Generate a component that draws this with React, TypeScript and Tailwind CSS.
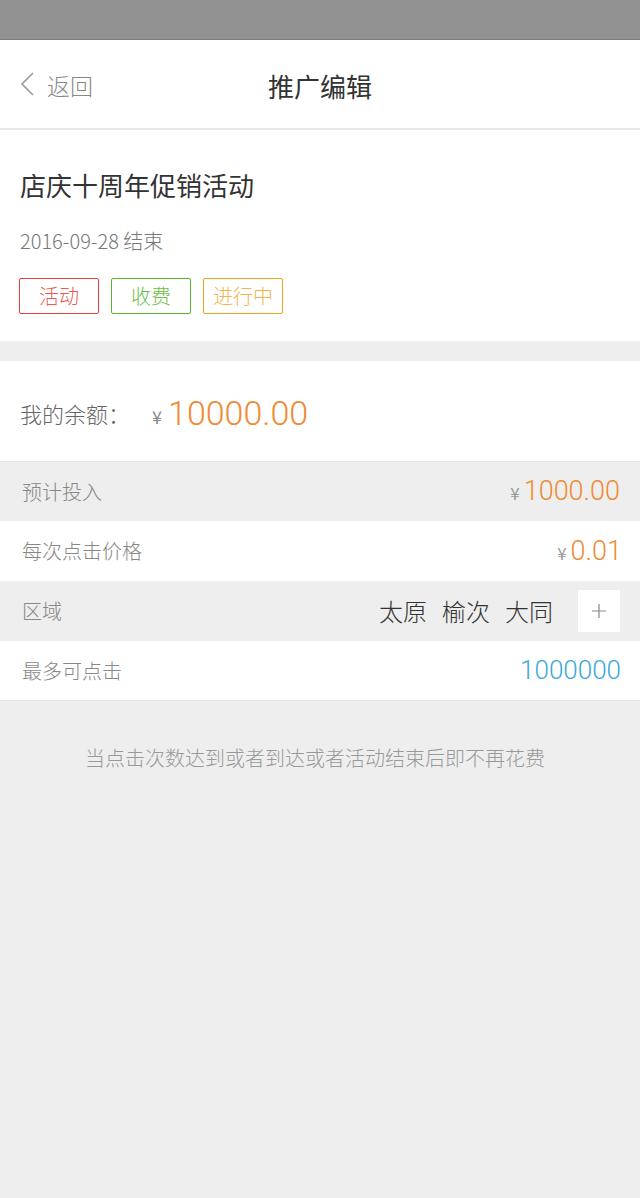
import React from 'react';

const font = { fontFamily: '"Noto Sans CJK SC", "Noto Sans", sans-serif' };
const digits = { fontFamily: 'Roboto, sans-serif' };

const tags = [
  { label: '活动', className: 'border-[#e5403a] text-[#ec5a52]' },
  { label: '收费', className: 'border-[#5cb531] text-[#6cc044]' },
  { label: '进行中', className: 'border-[#efa21c] text-[#f2b34a]' },
];

const cities = ['太原', '榆次', '大同'];

export default function App() {
  return (
    <div className="min-h-[1198px] bg-[#eeeeee] text-[#333]" style={font}>
      {/* status bar */}
      <div className="h-[40px] bg-[#929292] border-b border-[#7d7d7d]" />

      {/* header */}
      <div className="relative flex h-[90px] items-center justify-center bg-white border-b-2 border-[#e8e8e8]">
        <div className="absolute left-[20px] top-0 bottom-0 flex items-center gap-[13px] text-[#888]">
          <svg width="14" height="24" viewBox="0 0 14 24" fill="none">
            <path d="M13 1 L2 12 L13 23" stroke="#999" strokeWidth="1.6" />
          </svg>
          <span className="mt-[2px] text-[23px] font-light">返回</span>
        </div>
        <h1 className="mt-[2px] text-[26px] text-[#333]">推广编辑</h1>
      </div>

      {/* activity info */}
      <div className="bg-white px-[20px] pt-[37px] pb-[27px]">
        <div className="text-[26px] leading-[36px] text-[#333]">店庆十周年促销活动</div>
        <div className="mt-[24px] text-[20px] leading-[28px] font-light text-[#777]">2016-09-28 结束</div>
        <div className="mt-[23px] flex gap-[12px] -ml-[1px]">
          {tags.map((t) => (
            <span
              key={t.label}
              className={`flex h-[36px] w-[80px] items-center justify-center border text-[20px] font-light rounded-[2px] ${t.className}`}
            >
              {t.label}
            </span>
          ))}
        </div>
      </div>

      <div className="h-[20px]" />

      {/* balance */}
      <div className="flex h-[100px] items-center bg-white px-[20px] pt-[4px]">
        <span className="text-[22px] font-light text-[#666]">我的余额：</span>
        <span className="ml-[22px] mt-[6px] text-[18px] text-[#888]">¥</span>
        <span className="ml-[6px] text-[34px] font-light text-[#f08a34]" style={digits}>10000.00</span>
      </div>

      {/* rows */}
      <div className="flex h-[60px] items-center justify-between bg-[#eeeeee] border-t border-[#e6e6e6] pl-[22px] pr-[20px]">
        <span className="text-[20px] font-light text-[#888]">预计投入</span>
        <span className="flex items-baseline">
          <span className="mr-[4px] text-[17px] text-[#999]">¥</span>
          <span className="text-[27px] font-light text-[#f08a34]" style={digits}>1000.00</span>
        </span>
      </div>
      <div className="flex h-[60px] items-center justify-between bg-white pl-[22px] pr-[18px]">
        <span className="text-[20px] font-light text-[#888]">每次点击价格</span>
        <span className="flex items-baseline">
          <span className="mr-[4px] text-[17px] text-[#999]">¥</span>
          <span className="text-[27px] font-light text-[#f08a34]" style={digits}>0.01</span>
        </span>
      </div>
      <div className="flex h-[60px] items-center justify-between bg-[#eeeeee] pl-[22px] pr-[20px]">
        <span className="text-[20px] font-light text-[#888]">区域</span>
        <div className="flex items-center">
          <div className="flex gap-[15px] text-[24px] font-light text-[#333]">
            {cities.map((c) => (
              <span key={c}>{c}</span>
            ))}
          </div>
          <div className="ml-[25px] flex h-[42px] w-[42px] items-center justify-center bg-white">
            <svg width="16" height="16" viewBox="0 0 16 16">
              <path d="M8 1 V15 M1 8 H15" stroke="#888" strokeWidth="1.2" />
            </svg>
          </div>
        </div>
      </div>
      <div className="flex h-[60px] items-center justify-between bg-white pl-[22px] pr-[19px] border-b border-[#e6e6e6]">
        <span className="text-[20px] font-light text-[#888]">最多可点击</span>
        <span className="text-[26px] font-light text-[#3ba9d6]" style={digits}>1000000</span>
      </div>

      {/* note */}
      <p className="mt-[42px] pr-[10px] text-center text-[20px] font-light text-[#999]">当点击次数达到或者到达或者活动结束后即不再花费</p>
    </div>
  );
}
